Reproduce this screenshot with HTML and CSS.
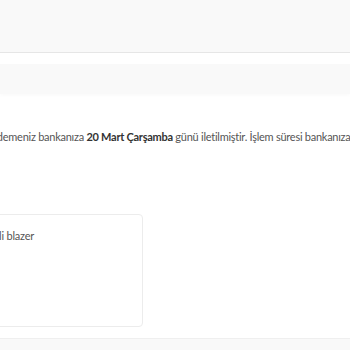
FILE: index.html
```html
<!DOCTYPE html>
<html lang="tr">
<head>
  <meta charset="UTF-8" />
  <meta name="viewport" content="width=device-width, initial-scale=1.0"/>
  <title>İade Durumu</title>
  <link rel="stylesheet" href="styles.css">
</head>
<body>

  <header class="topbar"></header>

  <div class="steps"></div>

  <p class="notice">İade ödemeniz bankanıza <b>20 Mart Çarşamba</b> günü iletilmiştir. İşlem süresi bankanıza göre değişebilir.</p>

  <div class="products">
    <div class="item">
      <span class="name">Düğmeli blazer</span>
    </div>
  </div>

  <footer class="bottom"></footer>

</body>
</html>
```

FILE: styles.css
```css
* {
  margin: 0;
  padding: 0;
  box-sizing: border-box;
}

body {
  font-family: 'Lato', 'Open Sans', sans-serif;
  color: #555;
  background: #fff;
  width: 350px;
  height: 350px;
  overflow: hidden;
}

.topbar {
  height: 53px;
  background: #f9f9f9;
  border-bottom: 1px solid #e6e6e6;
}

.steps {
  height: 30px;
  margin-top: 11px;
  background: #f9f9f9;
  box-shadow: 0 2px 3px rgba(0, 0, 0, 0.02);
}

.notice {
  margin-top: 36px;
  margin-left: -31px;
  white-space: nowrap;
  font-size: 11px;
  letter-spacing: -0.26px;
  line-height: 14px;
  color: #555;
}

.notice b {
  color: #333;
}

.products {
  display: flex;
  margin-top: 70px;
  margin-left: -60px;
}

.item {
  width: 203px;
  height: 113px;
  border: 1px solid #ececec;
  border-radius: 4px;
  padding: 14px 0 0 0;
}

.name {
  display: block;
  margin-left: 24px;
  font-size: 11px;
  letter-spacing: -0.2px;
  color: #555;
}

.bottom {
  margin-top: 11px;
  height: 20px;
  background: #f9f9f9;
  border-top: 1px solid #efefef;
}
```
